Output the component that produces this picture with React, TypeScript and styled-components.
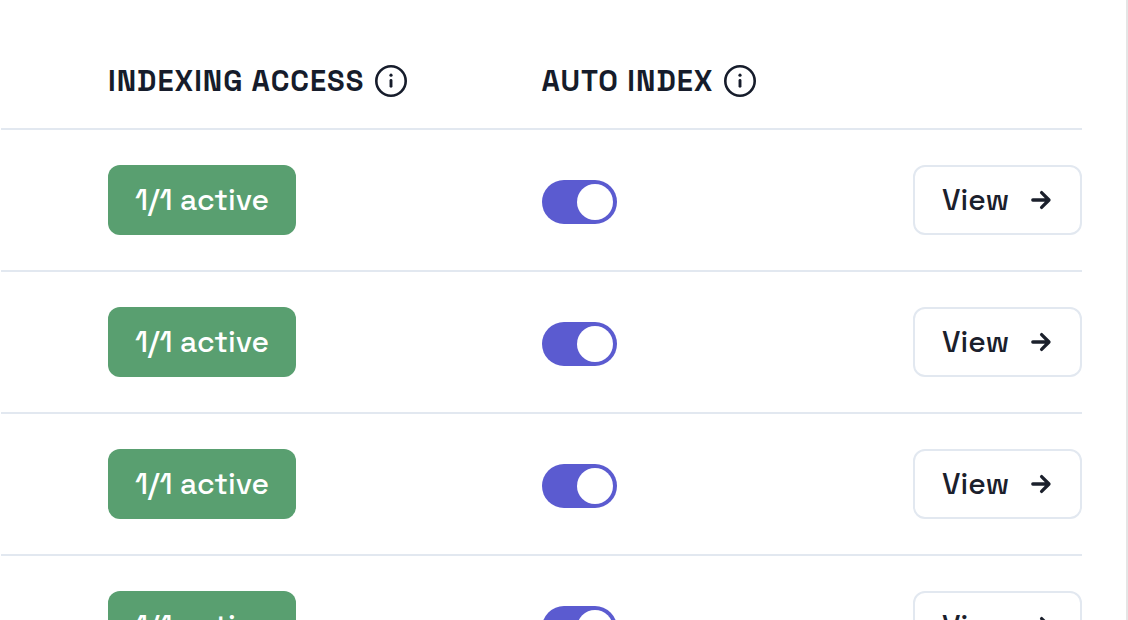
import React, { useState } from "react";
import styled, { createGlobalStyle } from "styled-components";

const GlobalStyle = createGlobalStyle`
  * { box-sizing: border-box; }
  body {
    margin: 0;
    background: #ffffff;
    color: #161c2b;
    font-family: "Space Grotesk", Inter, "Liberation Sans", sans-serif;
    overflow: hidden;
  }
`;

const Panel = styled.main`
  min-height: 100vh;
  padding: 34px 44px 34px 1px;
  border-right: 2px solid #e5e5e5;
`;

const Table = styled.table`
  width: 100%;
  table-layout: fixed;
  border-collapse: separate;
  border-spacing: 0;
`;

const HeadCell = styled.th<{ $width?: string; $inset?: boolean }>`
  width: ${(p) => p.$width ?? "auto"};
  padding: 31px 0 31px ${(p) => (p.$inset ? "107px" : "0")};
  border-bottom: 2px solid #e2e8f0;
  text-align: left;
`;

const HeadLabel = styled.div`
  display: flex;
  align-items: center;
  gap: 11px;
  font-size: 29px;
  line-height: 32px;
  font-weight: 700;
  letter-spacing: 1px;
  white-space: nowrap;
`;

const Cell = styled.td<{ $inset?: boolean; $end?: boolean }>`
  padding: 35px 0 35px ${(p) => (p.$inset ? "107px" : "0")};
  border-bottom: 2px solid #e2e8f0;
  text-align: ${(p) => (p.$end ? "right" : "left")};
`;

const Badge = styled.span`
  display: inline-flex;
  align-items: center;
  justify-content: center;
  min-width: 188px;
  height: 70px;
  border-radius: 12px;
  background: #599f70;
  color: #ffffff;
  font-size: 30px;
  line-height: 36px;
  font-weight: 500;
  vertical-align: top;
`;

const Switch = styled.input`
  appearance: none;
  display: flex;
  align-items: center;
  width: 75px;
  height: 44px;
  margin: 4px 0 0;
  padding: 0 4px;
  border-radius: 22px;
  background: #cbd5e1;
  cursor: pointer;

  &::before {
    content: "";
    width: 36px;
    height: 36px;
    border-radius: 50%;
    background: #ffffff;
  }

  &:checked {
    justify-content: flex-end;
    background: #5b5bd0;
  }
`;

const ViewButton = styled.button`
  display: inline-flex;
  align-items: center;
  justify-content: space-between;
  width: 169px;
  height: 70px;
  padding: 0 28px 0 27px;
  border: 2px solid #e2e8f0;
  border-radius: 12px;
  background: #ffffff;
  color: #1b202c;
  font-family: inherit;
  font-size: 30px;
  line-height: 36px;
  font-weight: 500;
  vertical-align: top;
  cursor: pointer;
`;

const InfoIcon = () => (
  <svg width="32" height="32" viewBox="0 0 32 32" fill="none" stroke="currentColor" strokeLinecap="round" aria-hidden="true">
    <circle cx="16" cy="16" r="14.7" strokeWidth="2.6" />
    <path d="M16 15.4v5.9" strokeWidth="2.9" />
    <circle cx="16" cy="10.2" r="1.6" fill="currentColor" stroke="none" />
  </svg>
);

const ArrowIcon = () => (
  <svg width="22" height="22" viewBox="0 0 22 22" fill="none" stroke="currentColor" strokeWidth="3.3" strokeLinecap="round" strokeLinejoin="round" aria-hidden="true">
    <path d="M2.8 11h16M11.6 3.6l7.4 7.4-7.4 7.4" />
  </svg>
);

const Row = ({ index }: { index: number }) => {
  const [auto, setAuto] = useState(true);
  return (
    <tr>
      <Cell $inset>
        <Badge>1/1 active</Badge>
      </Cell>
      <Cell>
        <Switch
          type="checkbox"
          role="switch"
          aria-label={`Auto index ${index}`}
          checked={auto}
          onChange={(e) => setAuto(e.target.checked)}
        />
      </Cell>
      <Cell $end>
        <ViewButton type="button">
          View
          <ArrowIcon />
        </ViewButton>
      </Cell>
    </tr>
  );
};

export default function App() {
  return (
    <>
      <GlobalStyle />
      <Panel>
        <Table>
          <thead>
            <tr>
              <HeadCell scope="col" $inset $width="50%">
                <HeadLabel>
                  INDEXING ACCESS
                  <InfoIcon />
                </HeadLabel>
              </HeadCell>
              <HeadCell scope="col">
                <HeadLabel>
                  AUTO INDEX
                  <InfoIcon />
                </HeadLabel>
              </HeadCell>
              <HeadCell />
            </tr>
          </thead>
          <tbody>
            {[1, 2, 3, 4].map((n) => (
              <Row key={n} index={n} />
            ))}
          </tbody>
        </Table>
      </Panel>
    </>
  );
}
